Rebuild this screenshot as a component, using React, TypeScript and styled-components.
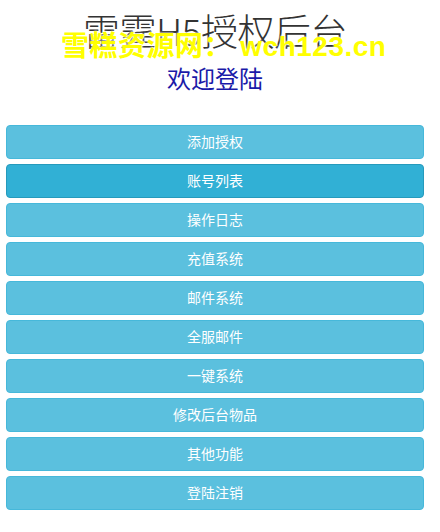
import React from 'react';
import styled, { createGlobalStyle } from 'styled-components';

const GlobalStyle = createGlobalStyle`
  html, body {
    margin: 0;
    padding: 0;
    background: #fff;
    font-family: "Liberation Sans", "Noto Sans CJK SC", sans-serif;
  }
`;

const menu = [
  '添加授权',
  '账号列表',
  '操作日志',
  '充值系统',
  '邮件系统',
  '全服邮件',
  '一键系统',
  '修改后台物品',
  '其他功能',
  '登陆注销',
];

const App: React.FC = () => {
  return (
    <>
      <GlobalStyle />
      <Page>
        <Header>
          <Title>雷霆H5授权后台</Title>
          <Welcome>欢迎登陆</Welcome>
          <Watermark>雪糕资源网： wch123.cn</Watermark>
        </Header>
        <Menu>
          {menu.map((label, i) => (
            <MenuButton key={label} $active={i === 1}>
              {label}
            </MenuButton>
          ))}
        </Menu>
      </Page>
    </>
  );
};

const Page = styled.div`
  padding: 0 16px 0 6px;
`;

const Header = styled.div`
  position: relative;
  display: flex;
  flex-direction: column;
  align-items: center;
  padding-top: 7px;
  height: 125px;
  box-sizing: border-box;
`;

const Title = styled.h1`
  margin: 0;
  font-family: "Noto Sans CJK SC", sans-serif;
  font-weight: 300;
  font-size: 37px;
  line-height: 46px;
  color: #333;
  letter-spacing: -0.5px;
`;

const Welcome = styled.h3`
  margin: 10px 0 0;
  font-family: "Noto Sans CJK SC", sans-serif;
  font-weight: 400;
  font-size: 24px;
  line-height: 30px;
  color: #1a1aa8;
`;

const Watermark = styled.div`
  position: absolute;
  left: 55px;
  top: 30px;
  font-family: "Liberation Sans", "Noto Sans CJK SC", sans-serif;
  font-weight: 700;
  font-size: 28px;
  line-height: 34px;
  color: #ffff00;
  white-space: nowrap;
  letter-spacing: 0.5px;
  text-shadow: 0 0 2px #fff, 0 0 2px #fff;
`;

const Menu = styled.div`
  display: flex;
  flex-direction: column;
  gap: 5px;
`;

const MenuButton = styled.button<{ $active?: boolean }>`
  display: block;
  width: 100%;
  height: 34px;
  padding: 0 0 3px;
  border-radius: 4px;
  border: 1px solid ${(p) => (p.$active ? '#269abc' : '#46b8da')};
  background: ${(p) => (p.$active ? '#31b0d5' : '#5bc0de')};
  color: #fff;
  font-family: "Noto Sans CJK SC", sans-serif;
  font-size: 14px;
  text-align: center;
  cursor: pointer;
`;

export default App;
